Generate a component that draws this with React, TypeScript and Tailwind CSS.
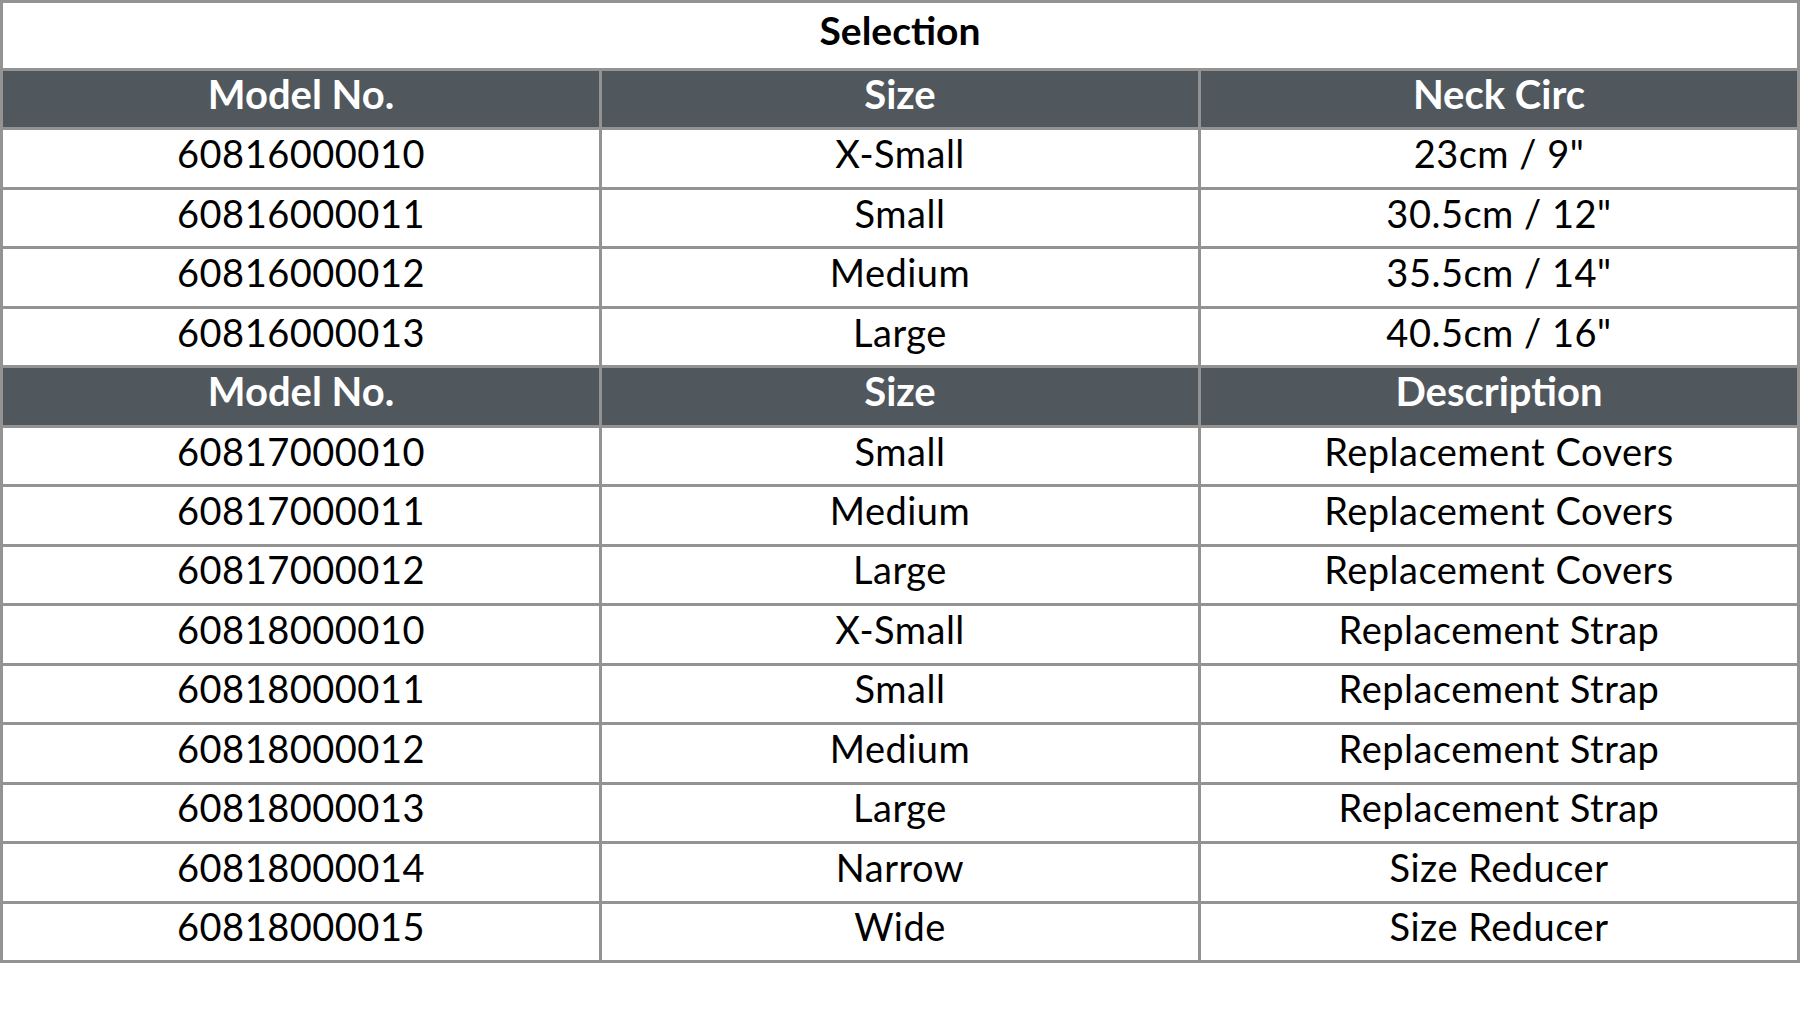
const firstRows: [string, string, string][] = [
  ['60816000010', 'X-Small', '23cm / 9"'],
  ['60816000011', 'Small', '30.5cm / 12"'],
  ['60816000012', 'Medium', '35.5cm / 14"'],
  ['60816000013', 'Large', '40.5cm / 16"'],
]

const secondRows: [string, string, string][] = [
  ['60817000010', 'Small', 'Replacement Covers'],
  ['60817000011', 'Medium', 'Replacement Covers'],
  ['60817000012', 'Large', 'Replacement Covers'],
  ['60818000010', 'X-Small', 'Replacement Strap'],
  ['60818000011', 'Small', 'Replacement Strap'],
  ['60818000012', 'Medium', 'Replacement Strap'],
  ['60818000013', 'Large', 'Replacement Strap'],
  ['60818000014', 'Narrow', 'Size Reducer'],
  ['60818000015', 'Wide', 'Size Reducer'],
]

function Row({ cells, head }: { cells: [string, string, string]; head?: boolean }) {
  return (
    <div
      className={`grid h-[59.47px] grid-cols-[1fr_3px_1fr_3px_1fr] border-t-[3px] border-[#939393] ${
        head
          ? 'bg-[#50575d] text-[40px] font-bold text-white'
          : 'bg-white text-[38px] font-normal tracking-[0.5px] text-black'
      }`}
    >
      <div className="flex items-center justify-center pb-[11px]">{cells[0]}</div>
      <div className="bg-[#939393]" />
      <div className="flex items-center justify-center pb-[11px]">{cells[1]}</div>
      <div className="bg-[#939393]" />
      <div className="flex items-center justify-center pb-[11px]">{cells[2]}</div>
    </div>
  )
}

export default function App() {
  return (
    <div className="h-[1032px] w-[1800px] bg-white font-['Lato','Open_Sans',sans-serif] leading-none">
      <div className="w-[1800px] border-[3px] border-[#939393]">
        <div className="flex h-[65px] items-center justify-center pb-[10px] text-[39px] font-bold text-black">
          Selection
        </div>
        <Row head cells={['Model No.', 'Size', 'Neck Circ']} />
        {firstRows.map((r) => (
          <Row key={r[0]} cells={r} />
        ))}
        <Row head cells={['Model No.', 'Size', 'Description']} />
        {secondRows.map((r) => (
          <Row key={r[0]} cells={r} />
        ))}
      </div>
    </div>
  )
}
